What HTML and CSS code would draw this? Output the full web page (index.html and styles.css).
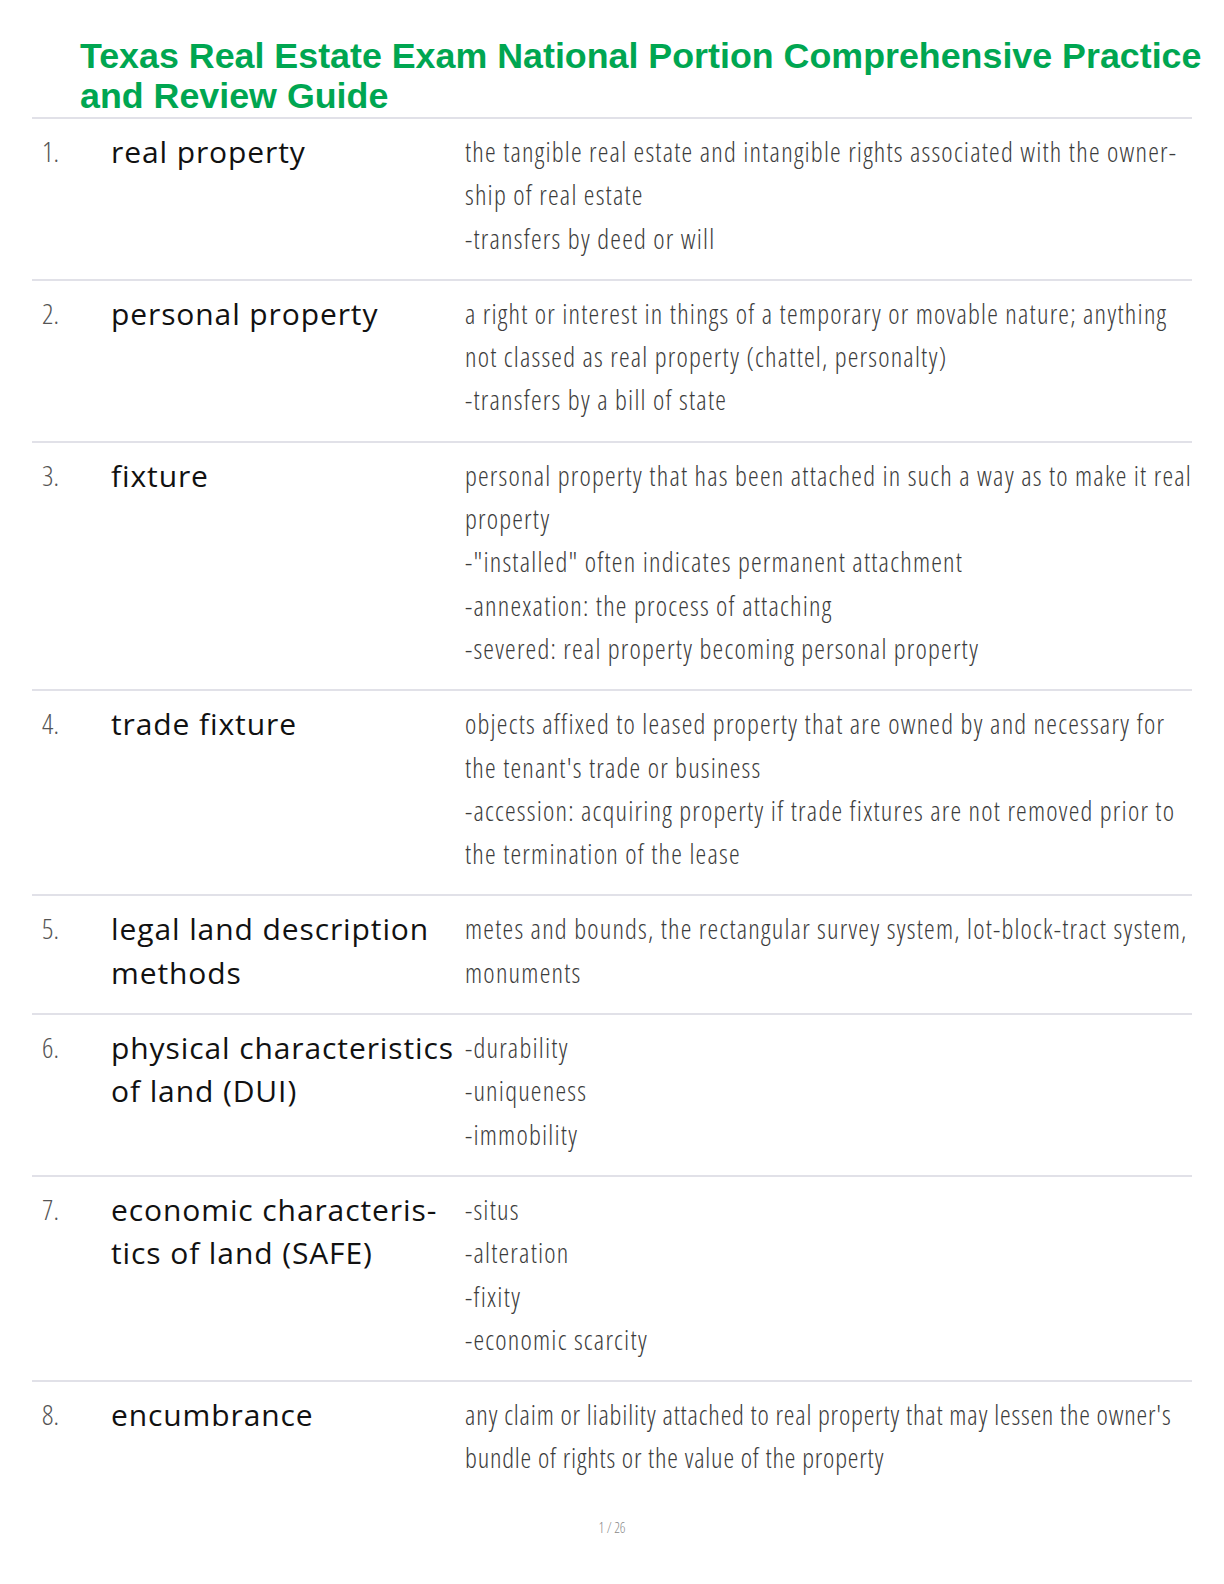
FILE: index.html
```html
<!DOCTYPE html>
<html lang="en">
<head>
<meta charset="utf-8">
<title>Texas Real Estate Exam</title>
<link rel="stylesheet" href="styles.css">
</head>
<body>
<div class="page">
  <h1 class="title">Texas Real Estate Exam National Portion Comprehensive Practice<br>and Review Guide</h1>
  <div class="cards">
    <div class="row">
      <div class="num">1.</div>
      <div class="term">real property</div>
      <div class="def">the tangible real estate and intangible rights associated with the owner-<br>ship of real estate<br>-transfers by deed or will</div>
    </div>
    <div class="row">
      <div class="num">2.</div>
      <div class="term">personal property</div>
      <div class="def">a right or interest in things of a temporary or movable nature; anything<br>not classed as real property (chattel, personalty)<br>-transfers by a bill of state</div>
    </div>
    <div class="row">
      <div class="num">3.</div>
      <div class="term">fixture</div>
      <div class="def">personal property that has been attached in such a way as to make it real<br>property<br>-"installed" often indicates permanent attachment<br>-annexation: the process of attaching<br>-severed: real property becoming personal property</div>
    </div>
    <div class="row">
      <div class="num">4.</div>
      <div class="term">trade fixture</div>
      <div class="def">objects affixed to leased property that are owned by and necessary for<br>the tenant's trade or business<br>-accession: acquiring property if trade fixtures are not removed prior to<br>the termination of the lease</div>
    </div>
    <div class="row">
      <div class="num">5.</div>
      <div class="term">legal land description<br>methods</div>
      <div class="def">metes and bounds, the rectangular survey system, lot-block-tract system,<br>monuments</div>
    </div>
    <div class="row">
      <div class="num">6.</div>
      <div class="term">physical characteristics<br>of land (DUI)</div>
      <div class="def">-durability<br>-uniqueness<br>-immobility</div>
    </div>
    <div class="row">
      <div class="num">7.</div>
      <div class="term">economic characteris-<br>tics of land (SAFE)</div>
      <div class="def">-situs<br>-alteration<br>-fixity<br>-economic scarcity</div>
    </div>
    <div class="row last">
      <div class="num">8.</div>
      <div class="term">encumbrance</div>
      <div class="def tight">any claim or liability attached to real property that may lessen the owner's<br>bundle of rights or the value of the property</div>
    </div>
  </div>
  <div class="footer">1 / 26</div>
</div>
</body>
</html>
```
FILE: styles.css
```css
html, body {
  margin: 0;
  padding: 0;
  background: #ffffff;
}
.page {
  width: 1160px;
  margin-left: 32px;
  padding-top: 36px;
}
.title {
  margin: 0;
  padding: 0 0 1px 48px;
  font-family: "Liberation Sans", Arial, sans-serif;
  font-weight: 700;
  font-size: 35.8px;
  line-height: 40px;
  color: #00a651;
  border-bottom: 2px solid #e1e1e8;
  white-space: nowrap;
}
.row {
  display: grid;
  grid-template-columns: 79px 354px 1fr;
  padding: 11px 0 19px 0;
  border-bottom: 2px solid #e1e1e8;
  line-height: 43.3px;
}
.row.last {
  border-bottom: none;
}
.num {
  padding-left: 10px;
  font-family: "Open Sans", sans-serif;
  font-weight: 300;
  font-stretch: 75%;
  font-size: 28px;
  color: #555;
}
.term {
  font-family: "Open Sans", sans-serif;
  font-weight: 400;
  font-size: 30px;
  letter-spacing: 0.9px;
  color: #111;
  white-space: nowrap;
}
.def {
  font-family: "Open Sans", sans-serif;
  font-weight: 300;
  font-stretch: 75%;
  font-size: 27px;
  letter-spacing: 1.2px;
  color: #3c3c3c;
  white-space: nowrap;
}
.def.tight {
  letter-spacing: 0.8px;
}
.footer {
  margin-top: 19px;
  text-align: center;
  font-family: "Open Sans", sans-serif;
  font-weight: 300;
  font-stretch: 75%;
  font-size: 14px;
  color: #888;
}
```
